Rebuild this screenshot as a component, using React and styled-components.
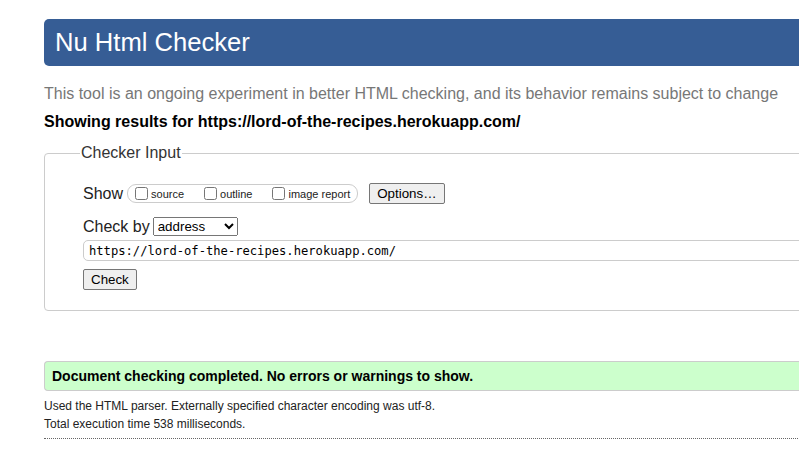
import React from "react";
import styled, { createGlobalStyle } from "styled-components";

const Global = createGlobalStyle`
  html, body { margin: 0; padding: 0; background: #fff; overflow: hidden; }
  body { font-family: "Liberation Sans", Arial, sans-serif; color: #000; }
`;

const Page = styled.div`
  padding: 19px 0 0 44px;
  width: 820px;
`;

const Header = styled.h1`
  margin: 0;
  height: 47px;
  display: flex;
  align-items: center;
  padding-left: 11px;
  background: #365d95;
  color: #fff;
  font-size: 25.6px;
  font-weight: normal;
  border-radius: 5px 0 0 5px;
`;

const Intro = styled.p`
  margin: 19px 0 0;
  font-size: 16px;
  line-height: 18px;
  color: #777;
`;

const Results = styled.p`
  margin: 10px 0 0;
  font-size: 16px;
  line-height: 18px;
  font-weight: bold;
`;

const Fieldset = styled.fieldset`
  margin: 13px 0 0;
  padding: 13px 0 20px 38px;
  border: 1px solid #ccc;
  border-radius: 4px 0 0 4px;
  min-width: 0;
`;

const Legend = styled.legend`
  margin-left: -3px;
  padding: 0 1px;
  font-size: 16px;
  color: #333;
`;

const Row = styled.div`
  display: flex;
  align-items: center;
  margin-top: ${(p) => p.$mt || 0}px;
  font-size: 16px;
  color: #222;
`;

const ShowBox = styled.span`
  display: inline-flex;
  align-items: center;
  margin-left: 4px;
  height: 17px;
  padding: 0 7px 0 6px;
  border: 1px solid #ccc;
  border-radius: 9px;
  font-size: 11px;
`;

const Check = styled.label`
  display: inline-flex;
  align-items: center;
  margin-right: ${(p) => p.$mr || 0}px;
  input { margin: 0 3px 0 1px; width: 13px; height: 13px; }
`;

const Button = styled.button`
  font-family: "Liberation Sans", Arial, sans-serif;
  font-size: 13.33px;
  height: 21px;
  padding: 0 7px;
  margin-left: ${(p) => p.$ml || 0}px;
  background: #efefef;
  border: 1px solid #767676;
  border-radius: 2px;
  color: #000;
`;

const Select = styled.select`
  font-family: "Liberation Sans", Arial, sans-serif;
  font-size: 13.33px;
  width: 85px;
  height: 19px;
  margin-left: 3px;
  padding: 0;
`;

const UrlInput = styled.input`
  display: block;
  box-sizing: border-box;
  width: calc(100% + 10px);
  height: 21px;
  margin-top: 4px;
  padding: 0 5px;
  font-family: "DejaVu Sans Mono", "Liberation Mono", monospace;
  font-size: 12.15px;
  color: #000;
  border: 1px solid #ccc;
  border-radius: 5px 0 0 5px;
  outline: none;
`;

const CheckRow = styled.div`
  margin-top: 8px;
`;

const Success = styled.div`
  margin-top: 50px;
  height: 28px;
  display: flex;
  align-items: center;
  padding-left: 7px;
  background: #ccffcc;
  border: 1px solid #ccc;
  border-right: none;
  border-radius: 4px 0 0 4px;
  font-size: 14px;
  font-weight: bold;
`;

const Note = styled.p`
  margin: ${(p) => p.$mt || 0}px 0 0;
  font-size: 12px;
  line-height: 14px;
  color: #222;
`;

const Divider = styled.hr`
  margin: 7px 0 0;
  border: none;
  border-top: 1px dotted #666;
`;

export default function App() {
  return (
    <>
      <Global />
      <Page>
        <Header>Nu Html Checker</Header>
        <Intro>
          This tool is an ongoing experiment in better HTML checking, and its behavior remains subject to change
        </Intro>
        <Results>Showing results for https://lord-of-the-recipes.herokuapp.com/</Results>
        <Fieldset>
          <Legend>Checker Input</Legend>
          <Row $mt={8}>
            Show
            <ShowBox>
              <Check $mr={19}><input type="checkbox" />source</Check>
              <Check $mr={19}><input type="checkbox" />outline</Check>
              <Check><input type="checkbox" />image report</Check>
            </ShowBox>
            <Button $ml={11}>Options…</Button>
          </Row>
          <Row $mt={13}>
            Check by
            <Select defaultValue="address">
              <option value="address">address</option>
              <option value="file">file upload</option>
              <option value="text">text input</option>
            </Select>
          </Row>
          <UrlInput readOnly value="https://lord-of-the-recipes.herokuapp.com/" />
          <CheckRow>
            <Button>Check</Button>
          </CheckRow>
        </Fieldset>
        <Success>Document checking completed. No errors or warnings to show.</Success>
        <Note $mt={8}>Used the HTML parser. Externally specified character encoding was utf-8.</Note>
        <Note $mt={4}>Total execution time 538 milliseconds.</Note>
        <Divider />
      </Page>
    </>
  );
}
